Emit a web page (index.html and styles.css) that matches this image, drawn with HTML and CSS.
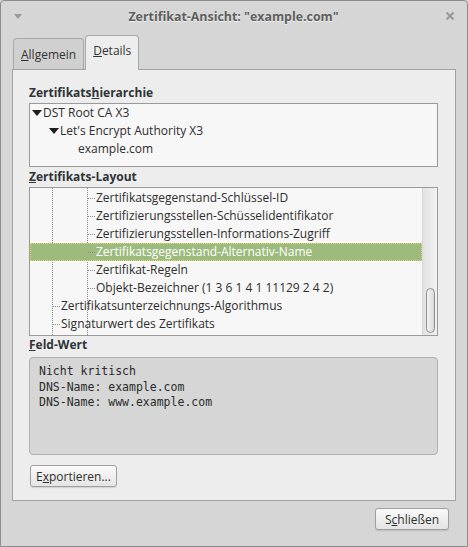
FILE: index.html
```html
<!DOCTYPE html>
<html lang="de">
<head>
    <meta charset="UTF-8">
    <title>Zertifikat-Ansicht</title>
    <link rel="stylesheet" href="styles.css">
</head>
<body>
    <div class="window">
        <div class="titlebar">
            <span class="menu-arrow"></span>
            <span class="title">Zertifikat-Ansicht: "example.com"</span>
            <svg class="close" width="10" height="10" viewBox="0 0 10 10">
                <path d="M1.5 1.5 L8.5 8.5 M8.5 1.5 L1.5 8.5" stroke="#9a9a9a" stroke-width="2.2"/>
            </svg>
        </div>
        <div class="content">
            <div class="tabs">
                <div class="tab"><u>A</u>llgemein</div>
                <div class="tab active"><u>D</u>etails</div>
            </div>
            <div class="notebook">
                <div class="label">Zertifikats<u>h</u>ierarchie</div>
                <div class="tree hierarchy">
                    <div class="row"><span class="expander"></span>DST Root CA X3</div>
                    <div class="row level1"><span class="expander"></span>Let's Encrypt Authority X3</div>
                    <div class="row level2">example.com</div>
                </div>

                <div class="label"><u>Z</u>ertifikats-Layout</div>
                <div class="tree layout">
                    <div class="rows">
                        <div class="row deep">Zertifikatsgegenstand-Schlüssel-ID</div>
                        <div class="row deep">Zertifizierungsstellen-Schüsselidentifikator</div>
                        <div class="row deep">Zertifizierungsstellen-Informations-Zugriff</div>
                        <div class="row deep selected">Zertifikatsgegenstand-Alternativ-Name</div>
                        <div class="row deep">Zertifikat-Regeln</div>
                        <div class="row deep last">Objekt-Bezeichner (1 3 6 1 4 1 11129 2 4 2)</div>
                        <div class="row mid">Zertifikatsunterzeichnungs-Algorithmus</div>
                        <div class="row mid last">Signaturwert des Zertifikats</div>
                    </div>
                    <div class="scrollbar">
                        <div class="thumb"></div>
                    </div>
                </div>

                <div class="label"><u>F</u>eld-Wert</div>
                <div class="field-value">Nicht kritisch
DNS-Name: example.com
DNS-Name: www.example.com</div>

                <button class="btn export">E<u>x</u>portieren...</button>
            </div>
            <div class="footer">
                <button class="btn close-btn">S<u>c</u>hließen</button>
            </div>
        </div>
    </div>
</body>
</html>
```

FILE: styles.css
```css
body {
    margin: 0;
    background-color: #d6d6d6;
    font-family: "Open Sans", sans-serif;
    font-size: 12px;
    color: #2e2e2e;
}
u {
    text-decoration: underline;
    text-underline-offset: 1px;
}
.window {
    width: 468px;
    height: 547px;
    box-sizing: border-box;
    border: 1px solid #8c8c8c;
    background-color: #d6d6d6;
    border-radius: 4px 4px 0 0;
}
.titlebar {
    height: 30px;
    display: flex;
    align-items: center;
    padding: 0 12px 0 13px;
}
.menu-arrow {
    width: 0;
    height: 0;
    border-left: 4px solid transparent;
    border-right: 4px solid transparent;
    border-top: 5px solid #9a9a9a;
}
.title {
    flex: 1;
    text-align: center;
    font-weight: bold;
    font-size: 12.4px;
    color: #5e5e5e;
    text-shadow: 0 1px 0 #eeeeee;
}
.content {
    padding: 0 11px 0 11px;
}
.tabs {
    display: flex;
    align-items: flex-end;
    height: 38px;
    padding-left: 1px;
    gap: 1px;
}
.tab {
    height: 31px;
    line-height: 31px;
    padding: 0 7px;
    border: 1px solid #a8a8a8;
    border-bottom: none;
    border-radius: 4px 4px 0 0;
    background-color: #d0d0d0;
    color: #333333;
    font-size: 12px;
    box-sizing: border-box;
}
.tab.active {
    height: 35px;
    line-height: 30px;
    padding: 0 7px 4px;
    background-color: #ededed;
    margin-bottom: -1px;
    position: relative;
}
.notebook {
    height: 432px;
    box-sizing: border-box;
    border: 1px solid #a2a2a2;
    background-color: #ededed;
    padding: 15px 17px 0 16px;
}
.label {
    font-weight: bold;
    font-size: 12px;
    color: #2e3436;
    line-height: 16px;
    margin-bottom: 2px;
}
.tree {
    border: 1px solid #9a9a9a;
    background-color: #f7f7f7;
    box-sizing: border-box;
    margin-bottom: 2px;
}
.hierarchy {
    height: 64px;
}
.row {
    height: 18px;
    line-height: 18px;
    white-space: nowrap;
    display: flex;
    align-items: center;
}
.expander {
    width: 0;
    height: 0;
    border-left: 5px solid transparent;
    border-right: 5px solid transparent;
    border-top: 6px solid #1e1e1e;
    margin: 0 1px 0 2px;
}
.level1 {
    padding-left: 17px;
}
.level2 {
    padding-left: 48px;
}
.layout {
    height: 149px;
    display: flex;
    margin-bottom: 1px;
}
.rows {
    flex: 1;
    padding-top: 1px;
    background-image:
        linear-gradient(#8a8a8a 50%, transparent 50%),
        linear-gradient(#8a8a8a 50%, transparent 50%);
    background-size: 1px 2px, 1px 2px;
    background-position: 22px 0, 57px 0;
    background-repeat: repeat-y;
    overflow: hidden;
}
.row.deep {
    padding-left: 66px;
}
.row.mid {
    padding-left: 31px;
}
.row.deep::before,
.row.mid::before {
    content: "";
    width: 7px;
    height: 1px;
    margin: 0 1px 0 -8px;
    background-image: linear-gradient(90deg, #8a8a8a 50%, transparent 50%);
    background-size: 2px 1px;
}
.row.selected {
    background-color: #9cbb7d;
    color: #ffffff;
    outline: 1px dotted #e4d26a;
    outline-offset: -1px;
}
.scrollbar {
    width: 14px;
    border-left: 1px solid #d8d8d8;
    background: linear-gradient(90deg, #e2e2e2, #f2f2f2);
    display: flex;
    flex-direction: column;
    justify-content: flex-end;
    align-items: center;
    padding-bottom: 2px;
}
.thumb {
    width: 7px;
    height: 43px;
    border: 1px solid #8e8e8e;
    border-radius: 5px;
    background: linear-gradient(90deg, #f4f4f4, #d9d9d9);
}
.field-value {
    height: 98px;
    box-sizing: border-box;
    border: 1px solid #b0b0b0;
    border-radius: 4px;
    background-color: #d6d6d6;
    padding: 6px 9px;
    font-family: "DejaVu Sans Mono", monospace;
    font-size: 11.5px;
    line-height: 15.5px;
    white-space: pre;
    color: #2a2a2a;
    margin-top: 4px;
}
.btn {
    font-family: "Open Sans", sans-serif;
    font-size: 12px;
    color: #2e2e2e;
    height: 22px;
    padding: 0 5px;
    border: 1px solid #a0a0a0;
    border-radius: 3px;
    background: linear-gradient(#fafafa, #e4e4e4);
    box-shadow: 0 1px 1px rgba(0, 0, 0, 0.12);
}
.export {
    display: block;
    margin-top: 10px;
    margin-left: 1px;
}
.close-btn {
    padding: 0 9px;
}
.footer {
    display: flex;
    justify-content: flex-end;
    padding: 7px 7px 0 0;
}
```
